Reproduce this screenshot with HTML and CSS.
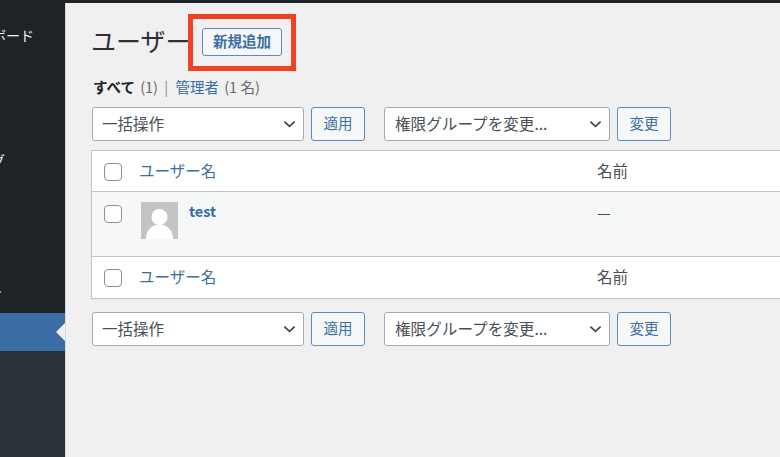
FILE: index.html
```html
<!DOCTYPE html>
<html lang="ja">
<head>
	<meta charset="UTF-8">
	<title>ユーザー</title>
	<link rel="stylesheet" href="styles.css">
</head>
<body>
	<div class="topbar"></div>
	<div class="page">
		<div class="sidebar">
			<div class="menu">
				<div class="menu-item first"><span>ダッシュボード</span></div>
				<div class="menu-item second"><span>ログ</span></div>
				<div class="menu-item third"><span>ト</span></div>
			</div>
			<div class="menu-active"></div>
			<div class="menu-rest"></div>
		</div>
		<div class="content">
			<div class="heading">
				<h1>ユーザー</h1>
				<a class="add-new">新規追加</a>
			</div>
			<div class="filters">
				<b>すべて</b> <i>(1)</i> <i class="sep">|</i> <a>管理者</a> <i>(1 名)</i>
			</div>
			<div class="actions top">
				<div class="select bulk"><span>一括操作</span><svg viewBox="0 0 14 8"><path d="M1.5 1.5 7 6.500 12.500 1.500"/></svg></div>
				<div class="btn">適用</div>
				<div class="select role"><span>権限グループを変更...</span><svg viewBox="0 0 14 8"><path d="M1.5 1.5 7 6.500 12.500 1.500"/></svg></div>
				<div class="btn">変更</div>
			</div>
			<div class="table">
				<div class="row head">
					<div class="check"><div class="box"></div></div>
					<a class="col-user">ユーザー名</a>
					<div class="col-name">名前</div>
				</div>
				<div class="row body">
					<div class="check"><div class="box"></div></div>
					<div class="avatar">
						<svg viewBox="0 0 37 37"><rect width="37" height="37" fill="#c4c4c4"/><circle cx="18.5" cy="15" r="8"/><path d="M5 37C5 28 11 22.500 18.500 22.500S32 28 32 37Z"/></svg>
					</div>
					<a class="username">test</a>
					<div class="col-name dash">—</div>
				</div>
				<div class="row foot">
					<div class="check"><div class="box"></div></div>
					<a class="col-user">ユーザー名</a>
					<div class="col-name">名前</div>
				</div>
			</div>
			<div class="actions bottom">
				<div class="select bulk"><span>一括操作</span><svg viewBox="0 0 14 8"><path d="M1.5 1.5 7 6.500 12.500 1.500"/></svg></div>
				<div class="btn">適用</div>
				<div class="select role"><span>権限グループを変更...</span><svg viewBox="0 0 14 8"><path d="M1.5 1.5 7 6.500 12.500 1.500"/></svg></div>
				<div class="btn">変更</div>
			</div>
		</div>
	</div>
	<div class="highlight"></div>
</body>
</html>
```

FILE: styles.css
```css
html, body {
	height: 100%;
	margin: 0;
	padding: 0;
	overflow: hidden;
}
body {
	display: flex;
	flex-direction: column;
	background: #f0f0f1;
	color: #484f55;
	font-family: "Noto Sans CJK JP", "Liberation Sans", sans-serif;
	font-size: 15.5px;
}
a {
	color: #3a6ea5;
}
i {
	font-style: normal;
}
.topbar {
	height: 3px;
	background: #1d2327;
}
.page {
	display: flex;
	flex: 1;
}
.sidebar {
	width: 65px;
	display: flex;
	flex-direction: column;
	border-right: 1px solid #d5d6d8;
}
.menu {
	height: 310px;
	background: #1d2327;
	color: #f0f0f1;
	overflow: hidden;
}
.menu-item {
	display: flex;
	justify-content: flex-end;
	white-space: nowrap;
	line-height: 20px;
	font-size: 14px;
}
.menu-item.first {
	width: 34px;
	margin-top: 22px;
}
.menu-item.second {
	width: 5px;
	margin-top: 105px;
}
.menu-item.third {
	width: 3px;
	margin-top: 110px;
}
.menu-active {
	height: 38px;
	background: #3a6ea5;
	position: relative;
}
.menu-active::after {
	content: "";
	position: absolute;
	right: 0;
	top: 10px;
	border: 9px solid transparent;
	border-left-width: 0;
	border-right-color: #f0f0f1;
}
.menu-rest {
	flex: 1;
	background: #2c3338;
}
.content {
	flex: 1;
	min-width: 0;
	padding-left: 26px;
}
.heading {
	display: flex;
	align-items: center;
	height: 46px;
	margin-top: 16px;
}
h1 {
	margin: -5px 0 0 -1px;
	width: 111px;
	font-size: 25px;
	font-weight: 400;
	color: #2c3338;
}
.add-new {
	box-sizing: border-box;
	width: 80px;
	height: 28px;
	line-height: 24px;
	text-align: center;
	border: 1px solid #5a8bc0;
	border-radius: 3px;
	background: #f6f7f7;
	font-size: 14.5px;
	font-weight: 700;
}
.filters {
	margin-top: 12px;
	padding-left: 1px;
	line-height: 20px;
	font-size: 14.5px;
	color: #646970;
}
.filters b {
	margin-right: 2px;
	color: #1d2327;
}
.filters a {
	margin-right: 2px;
}
.sep {
	color: #8c8f94;
	margin: 0 4px 0 3px;
}
.actions {
	display: flex;
	align-items: center;
	height: 34px;
}
.actions.top {
	margin-top: 10px;
}
.actions.bottom {
	margin-top: 13px;
}
.select {
	box-sizing: border-box;
	display: flex;
	align-items: center;
	justify-content: space-between;
	height: 34px;
	padding: 0 7px 0 9px;
	border: 1px solid #a7aaad;
	border-radius: 3px;
	background: #fff;
	white-space: nowrap;
}
.select span {
	padding-bottom: 3px;
}
.select svg {
	flex: none;
	width: 13px;
	height: 8px;
	fill: none;
	stroke: #3c434a;
	stroke-width: 1.8;
}
.bulk {
	width: 212px;
}
.role {
	width: 226px;
	padding-left: 10px;
	font-size: 15.6px;
}
.btn {
	box-sizing: border-box;
	width: 54px;
	height: 34px;
	line-height: 29px;
	margin: 0 19px 0 7px;
	text-align: center;
	border: 1px solid #5a8bc0;
	border-radius: 3px;
	background: #f6f7f7;
	color: #3a6ea5;
	font-size: 14.5px;
}
.table {
	margin: 9px -2px 0 -1px;
	background: #fff;
	border: 1px solid #c3c4c7;
	box-shadow: 0 1px 1px rgba(0,0,0,.04);
}
.row {
	display: flex;
	align-items: center;
	height: 41px;
}
.row.head {
	height: 40px;
	border-bottom: 1px solid #c3c4c7;
}
.row.body {
	align-items: flex-start;
	height: 64px;
	background: #f6f7f7;
	border-bottom: 1px solid #c3c4c7;
}
.check {
	width: 47px;
	padding-left: 12px;
	box-sizing: border-box;
}
.box {
	box-sizing: border-box;
	width: 18px;
	height: 18px;
	margin-top: 1px;
	border: 1px solid #8c8f94;
	border-radius: 4px;
	background: #fff;
}
.row.body .check {
	padding-top: 12px;
}
.col-user {
	width: 458px;
	padding-bottom: 3px;
}
.avatar {
	width: 37px;
	height: 37px;
	margin: 10px 0 0 2px;
}
.avatar svg {
	display: block;
	fill: #fff;
}
.username {
	width: 408px;
	margin: 9px 0 0 11px;
	line-height: 20px;
	font-size: 14.5px;
	font-weight: 700;
}
.col-name {
	flex: 1;
	padding-bottom: 3px;
}
.dash {
	margin-top: 10px;
	line-height: 20px;
}
.highlight {
	position: absolute;
	left: 188px;
	top: 14px;
	width: 108px;
	height: 57px;
	box-sizing: border-box;
	border: 5px solid #ee4223;
}
```
